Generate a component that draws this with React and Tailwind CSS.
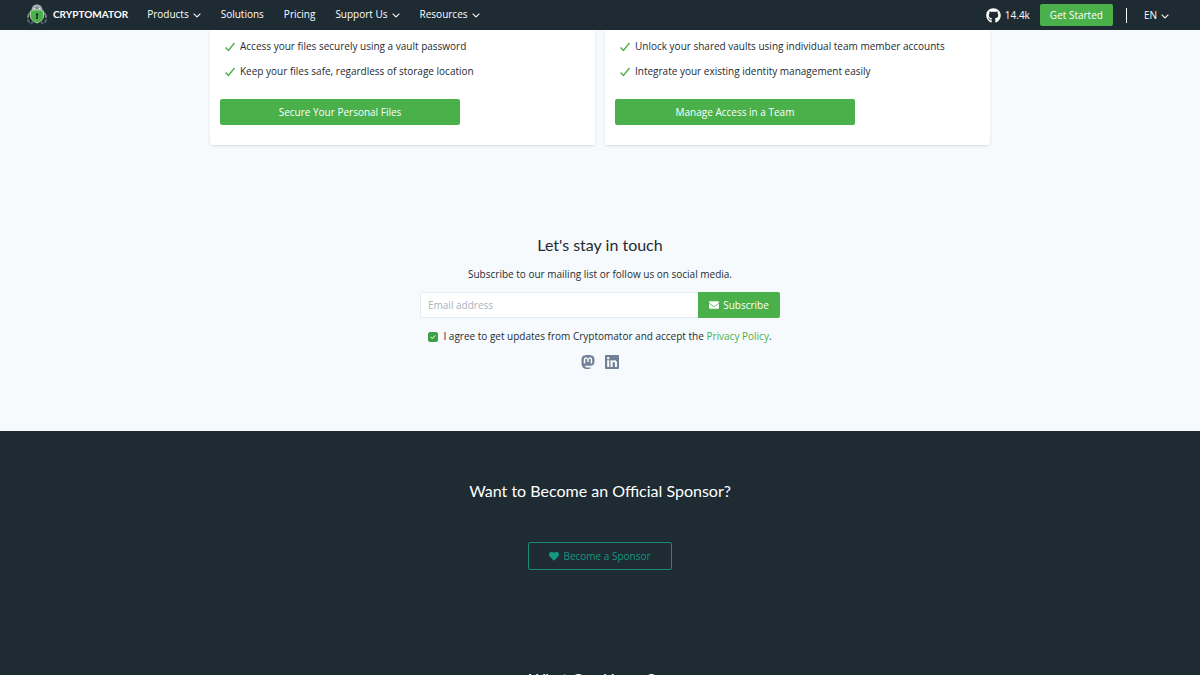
import React from "react";
import {
  FaChevronDown,
  FaGithub,
  FaEnvelope,
  FaMastodon,
  FaLinkedin,
  FaHeart,
  FaCheck,
} from "react-icons/fa6";

const NAV_ITEMS = [
  { label: "Products", menu: true },
  { label: "Solutions" },
  { label: "Pricing" },
  { label: "Support Us", menu: true },
  { label: "Resources", menu: true },
];

const CARDS = [
  {
    points: [
      "Access your files securely using a vault password",
      "Keep your files safe, regardless of storage location",
    ],
    cta: "Secure Your Personal Files",
  },
  {
    points: [
      "Unlock your shared vaults using individual team member accounts",
      "Integrate your existing identity management easily",
    ],
    cta: "Manage Access in a Team",
  },
];

function Logo() {
  return (
    <svg viewBox="0 0 44 42" className="h-[21px] w-[22px]" aria-hidden="true">
      {/* arms and legs */}
      <g fill="none" stroke="#7d868b" strokeWidth="4" strokeLinecap="round">
        <path d="M8 18C5 20 4 22 4 26" />
        <path d="M36 18c3 2 4 4 4 8" />
        <path d="M4 32l2 4" stroke="#56626a" />
        <path d="m40 32-2 4" stroke="#56626a" />
        <path d="m13 36-2 3" stroke="#56626a" />
        <path d="m31 36 2 3" stroke="#56626a" />
      </g>
      {/* head */}
      <path d="M11 13C11 5 16 1 22 1s11 4 11 12z" fill="#a9b0b4" />
      <path d="M15 7c4-2 10-2 14 0v4H15z" fill="#7c878d" />
      <circle cx="17" cy="9" r="2" fill="#e8ebec" />
      <circle cx="27" cy="9" r="2" fill="#e8ebec" />
      {/* shield */}
      <path
        d="M9 14c9-3 17-3 26 0v10c0 7-6 11-13 14C15 35 9 31 9 24z"
        fill="#49b04a"
        stroke="#a5d9a3"
        strokeWidth="2"
      />
      <circle cx="22" cy="21" r="2.5" fill="#1e2b33" />
      <path d="M21 22h2l1 8h-4z" fill="#1e2b33" />
    </svg>
  );
}

function Chevron() {
  return (
    <FaChevronDown
      className="mt-px h-2 w-2"
      stroke="currentColor"
      strokeWidth="12"
      aria-hidden="true"
    />
  );
}

function Header() {
  return (
    <header className="sticky top-0 z-10 flex h-[30px] items-center justify-between bg-[#1e2b33] pr-[31px] pl-[26px] text-white">
      <nav className="flex items-center gap-5 pb-px">
        <a href="#home" className="-mr-px flex items-center gap-[5px]">
          <Logo />
          <span className="font-['Lato',sans-serif] text-[10px] font-bold">
            CRYPTOMATOR
          </span>
        </a>
        {NAV_ITEMS.map((item) =>
          item.menu ? (
            <button key={item.label} className="flex items-center gap-1">
              {item.label}
              <Chevron />
            </button>
          ) : (
            <a key={item.label} href="#nav">
              {item.label}
            </a>
          )
        )}
      </nav>
      <div className="flex items-center">
        <a href="#github" className="flex items-center gap-1">
          <FaGithub className="h-[15px] w-[15px]" />
          14.4k
        </a>
        <a
          href="#start"
          className="ml-[10px] rounded-xs bg-[#49b04a] px-[10px] py-[3px] leading-4"
        >
          Get Started
        </a>
        <span className="ml-[13px] h-[15px] w-px bg-white" />
        <button className="ml-[17px] flex items-center gap-1">
          EN
          <Chevron />
        </button>
      </div>
    </header>
  );
}

function ProductCard({ points, cta }) {
  return (
    <article className="rounded-xs bg-white px-[10px] pt-[9px] pb-5 shadow-sm">
      <ul className="space-y-[10px] px-[5px]">
        {points.map((point) => (
          <li key={point} className="flex items-center gap-[5px]">
            <svg
              viewBox="0 0 10 10"
              className="h-[10px] w-[10px]"
              fill="none"
              stroke="#49b04a"
              strokeWidth="1.4"
              aria-hidden="true"
            >
              <path d="m.6 5.500 2.800 3L9.500 1" />
            </svg>
            {point}
          </li>
        ))}
      </ul>
      <a
        href="#product"
        className="mt-5 flex h-[26px] w-[240px] items-center justify-center rounded-xs bg-[#49b04a] text-white"
      >
        {cta}
      </a>
    </article>
  );
}

function Newsletter() {
  return (
    <section className="mx-auto mt-[89px] w-full max-w-[360px] pb-[61px] text-center">
      <h2 className="font-['Lato',sans-serif] text-base leading-[22px]">
        Let's stay in touch
      </h2>
      <p className="mt-[11px]">
        Subscribe to our mailing list or follow us on social media.
      </p>
      <form onSubmit={(e) => e.preventDefault()}>
        <div className="mt-[10px] flex h-[26px]">
          <input
            type="email"
            aria-label="Email address"
            placeholder="Email address"
            className="min-w-0 flex-1 rounded-l-xs border border-r-0 border-[#e6ebf0] bg-white px-[7px] placeholder:text-[#a8b2c0]"
          />
          <button className="flex w-[82px] items-center justify-center gap-1 rounded-r-xs bg-[#49b04a] text-white">
            <FaEnvelope className="h-[10px] w-[10px]" />
            Subscribe
          </button>
        </div>
        <div className="mt-[11px] flex items-center justify-center gap-[5px]">
          <span className="relative mt-px flex h-[10px] w-[10px]">
            <input
              id="agree"
              type="checkbox"
              defaultChecked
              className="peer h-[10px] w-[10px] appearance-none rounded-xs border border-[#3f9f46] checked:bg-[#3f9f46]"
            />
            <FaCheck className="pointer-events-none absolute inset-[2px] hidden h-[6px] w-[6px] text-white peer-checked:block" />
          </span>
          <p>
            <label htmlFor="agree">
              I agree to get updates from Cryptomator and accept the{" "}
            </label>
            <a href="#privacy" className="text-[#49b04a]">
              Privacy Policy
            </a>
            .
          </p>
        </div>
      </form>
      <div className="mt-[10px] flex justify-center gap-[10px] text-[#718096]">
        <a href="#mastodon" aria-label="Mastodon">
          <FaMastodon className="h-4 w-[14px]" />
        </a>
        <a href="#linkedin" aria-label="LinkedIn">
          <FaLinkedin className="h-4 w-[14px]" />
        </a>
      </div>
    </section>
  );
}

function Sponsors() {
  return (
    <section className="flex flex-col items-center bg-[#1e2b33] pt-[49px] text-white">
      <h2 className="font-['Lato',sans-serif] text-base leading-[22px]">
        Want to Become an Official Sponsor?
      </h2>
      <a
        href="#sponsor"
        className="mt-10 flex h-7 w-[144px] items-center justify-center gap-1 rounded-xs border border-[#1a8a78] text-[#14967f]"
      >
        <FaHeart className="h-[10px] w-[10px]" />
        Become a Sponsor
      </a>
      <h2 className="mt-[98px] font-['Lato',sans-serif] text-base leading-[22px]">
        What Our Users Say
      </h2>
    </section>
  );
}

export default function App() {
  return (
    <div className="h-screen overflow-hidden bg-[#f7fafc] font-['Open_Sans',sans-serif] text-[10px] leading-[15px] text-[#1e2b33]">
      <Header />
      <main>
        <div className="mx-auto grid max-w-[780px] grid-cols-2 gap-[10px]">
          {CARDS.map((card) => (
            <ProductCard key={card.cta} {...card} />
          ))}
        </div>
        <Newsletter />
        <Sponsors />
      </main>
    </div>
  );
}
